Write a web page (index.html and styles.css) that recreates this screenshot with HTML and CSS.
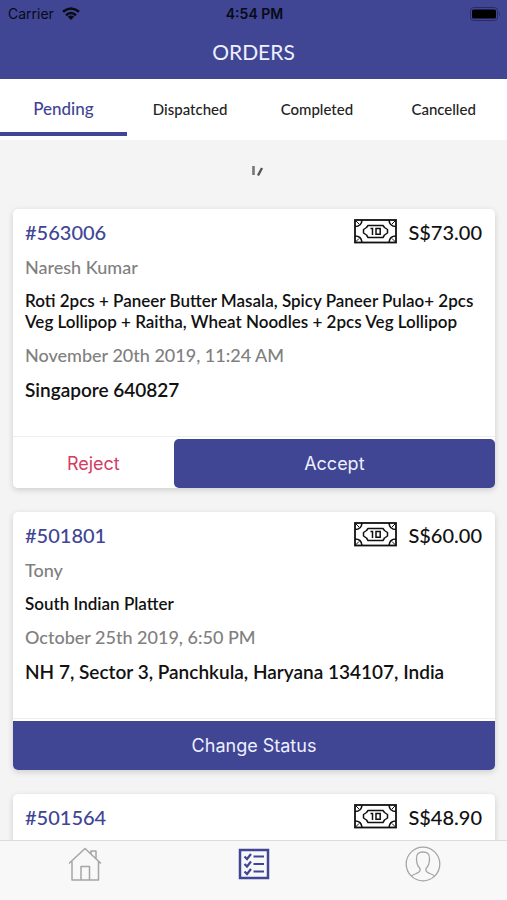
FILE: index.html
```
<!DOCTYPE html>
<html lang="en">
<head>
<meta charset="utf-8">
<meta name="viewport" content="width=device-width, initial-scale=1">
<title>Orders</title>
<link rel="stylesheet" href="styles.css">
</head>
<body>
<svg class="defs" aria-hidden="true">
  <symbol id="cash" viewBox="0 0 43 25">
    <g fill="none" stroke="currentColor">
      <rect x="1" y="1" width="41" height="22.500" stroke-width="1.800"/>
      <path d="M1 7.500Q7.500 7.500 8 1M35 1Q35.500 7.500 42 7.500M1 17Q7.500 17 8 23.500M35 23.500Q35.500 17 42 17" stroke-width="1.600"/>
      <path d="M1 1l4 4M42 1l-4 4M1 23.500l4-4M42 23.500l-4-4" stroke-width="1"/>
      <path d="M14 6.500H29L30.500 8.500L33.500 10.500V14L30.500 16L29 18.500H14L12.500 16L9.500 14V10.500L12.500 8.500Z" stroke-width="1.500" stroke-linejoin="round"/>
      <path d="M16.500 9.500H18.500V16M22 9.500H26.200V15.300H22Z" stroke-width="1.500"/>
    </g>
  </symbol>
</svg>
<div class="app">
  <header class="header">
    <div class="status">
      <span class="carrier">Carrier
        <svg class="wifi" viewBox="0 0 18 13" aria-hidden="true"><g fill="none" stroke="#080a14" stroke-width="2.500"><path d="M1 4.800Q9 -1.800 17 4.800"/><path d="M4 8.200Q9 3.800 14 8.200"/></g><path d="M5.800 9.700Q9 7.300 12.200 9.700L9 13Z" fill="#080a14"/></svg>
      </span>
      <span class="clock">4:54 PM</span>
      <svg class="battery" viewBox="0 0 31 14" aria-hidden="true"><rect x=".5" y=".5" width="27" height="13" rx="3" fill="none" stroke="#292c63"/><rect x="2" y="2.500" width="24" height="9" rx="1.500" fill="#000"/><path d="M29 5q2 2 0 4z" fill="#292c63"/></svg>
    </div>
    <h1 class="title">ORDERS</h1>
  </header>
  <nav class="tabs">
    <a class="tab active" href="#pending" aria-current="page">Pending</a>
    <a class="tab" href="#dispatched">Dispatched</a>
    <a class="tab" href="#completed">Completed</a>
    <a class="tab" href="#cancelled">Cancelled</a>
  </nav>
  <main class="orders">
    <div class="loader">
      <svg viewBox="0 0 12 12" aria-hidden="true"><path d="M1.500 0V9" stroke="#777" stroke-width="2.600"/><path d="M10 2L6 9.500" stroke="#555" stroke-width="2.400"/></svg>
    </div>
    <article class="card">
      <div class="details">
        <div class="summary"><h2 class="number">#563006</h2><svg class="cash" aria-hidden="true"><use href="#cash"/></svg><span class="price">S$73.00</span></div>
        <p class="muted">Naresh Kumar</p>
        <p class="items">Roti 2pcs + Paneer Butter Masala, Spicy Paneer Pulao+ 2pcs Veg Lollipop + Raitha, Wheat Noodles + 2pcs Veg Lollipop</p>
        <p class="muted">November 20th 2019, 11:24 AM</p>
        <p class="address">Singapore 640827</p>
      </div>
      <div class="actions">
        <button class="button reject" type="button">Reject</button>
        <button class="button accept" type="button">Accept</button>
      </div>
    </article>
    <article class="card">
      <div class="details">
        <div class="summary"><h2 class="number">#501801</h2><svg class="cash" aria-hidden="true"><use href="#cash"/></svg><span class="price">S$60.00</span></div>
        <p class="muted">Tony</p>
        <p class="items">South Indian Platter</p>
        <p class="muted">October 25th 2019, 6:50 PM</p>
        <p class="address">NH 7, Sector 3, Panchkula, Haryana 134107, India</p>
      </div>
      <div class="actions">
        <button class="button change" type="button">Change Status</button>
      </div>
    </article>
    <article class="card">
      <div class="details">
        <div class="summary"><h2 class="number">#501564</h2><svg class="cash" aria-hidden="true"><use href="#cash"/></svg><span class="price">S$48.90</span></div>
      </div>
    </article>
  </main>
  <nav class="bottom">
    <a class="item" href="#home" aria-label="Home">
      <svg viewBox="0 0 36 36" fill="none" stroke="currentColor" stroke-width="1.500" stroke-linejoin="round" stroke-linecap="round"><path d="M2.500 17L18 2.500L33.500 17M5 15.500V34H31.500V15.500M24 8V5H29V12.500M14 34V20.500H22.500V34"/></svg>
    </a>
    <a class="item current" href="#orders" aria-label="Orders">
      <svg viewBox="0 0 36 36" fill="none" stroke="currentColor" stroke-width="2.500"><path d="M4 4H32V32H4Z"/><path d="M8.500 10.500L11 13L15 8M8.500 18L11 20.500L15 15.500M8.500 25.500L11 28L15 23M17.500 10.500H28M17.500 18H28M17.500 25.500H28" stroke-width="2.200"/></svg>
    </a>
    <a class="item" href="#profile" aria-label="Profile">
      <svg viewBox="0 0 36 36" fill="none" stroke="currentColor" stroke-width="1.300"><circle cx="18" cy="18" r="16.800"/><path d="M6.500 30C9 27.500 14.500 27.500 15 24.500V22.500C12.500 20 11.500 17 11.500 13C11 7.500 14 6 18 6S25 7.500 24.500 13C24.500 17 23.500 20 21 22.500V24.500C21.500 27.500 27 27.500 29.500 30"/></svg>
    </a>
  </nav>
</div>
</body>
</html>
```
FILE: styles.css
```
* { box-sizing: border-box; }
body { margin: 0; font-family: Lato, sans-serif; font-weight: 500; color: #111; background: #f4f4f4; }
h1, h2, p { margin: 0; font-weight: inherit; }
a { color: inherit; text-decoration: none; }
svg { display: block; }
.defs { display: none; }
.app { height: 100vh; display: flex; flex-direction: column; overflow: hidden; }

.header { background: #404594; }
.status { display: grid; grid-template-columns: 1fr auto 1fr; align-items: center; height: 27px; padding: 0 6px 0 8px; font: 400 14px/20px Inter, sans-serif; color: #080a14; }
.carrier { display: flex; align-items: center; gap: 8px; }
.wifi { width: 18px; height: 13px; }
.clock { font-weight: 600; }
.battery { width: 31px; height: 14px; justify-self: end; }
.title { height: 52px; font-size: 21px; font-weight: 400; line-height: 50px; text-align: center; color: #eef0ff; }

.tabs { display: grid; grid-template-columns: repeat(4, 1fr); height: 61px; flex: none; background: #fff; }
.tab { height: 57px; border-bottom: 4px solid transparent; font-size: 15px; line-height: 60px; text-align: center; color: #222; }
.tab.active { border-color: #404594; font-size: 17px; color: #404594; }

.orders { flex: 1; min-height: 0; overflow: hidden; padding: 0 12px; display: flex; flex-direction: column; gap: 24px; }
.loader { flex: none; height: 45px; padding: 26px 0 0 8px; }
.loader svg { width: 12px; height: 12px; margin: 0 auto; }
.card { flex: none; margin-left: 1px; border-radius: 5px; background: #fff; box-shadow: 0 2px 6px rgba(0, 0, 0, .16); }
.details { display: flex; flex-direction: column; gap: 11px; padding: 11px 13px 34px 12px; }
.summary { display: flex; align-items: center; gap: 11px; font-size: 20px; line-height: 24px; }
.number { margin-right: auto; font-size: 20px; color: #404594; }
.cash { width: 43px; height: 25px; margin: -1px 0 0; }
.muted { font-size: 18px; line-height: 24px; color: #808080; }
.items { font-size: 17px; line-height: 21px; font-weight: 600; }
.address { font-size: 19px; line-height: 24px; font-weight: 600; }
.actions { display: flex; padding-top: 2px; border-top: 1px solid #eee; }
.button { height: 49px; padding: 0; border: 0; font: 400 18px/24px Inter, sans-serif; cursor: pointer; }
.reject { flex: 1; border-radius: 0 0 5px 5px; background: #fff; color: #d33c64; }
.accept { flex: 2; border-radius: 5px; background: #404594; color: #eef0ff; }
.change { flex: 1; border-radius: 0 0 5px 5px; background: #404594; color: #eef0ff; }

.bottom { flex: none; height: 60px; display: grid; grid-template-columns: repeat(3, 1fr); border-top: 1px solid #dcdcdc; background: #f8f8f8; }
.item { display: flex; justify-content: center; padding-top: 5px; color: #a5a5a5; }
.item svg { width: 36px; height: 36px; }
.current { color: #404594; }
```
